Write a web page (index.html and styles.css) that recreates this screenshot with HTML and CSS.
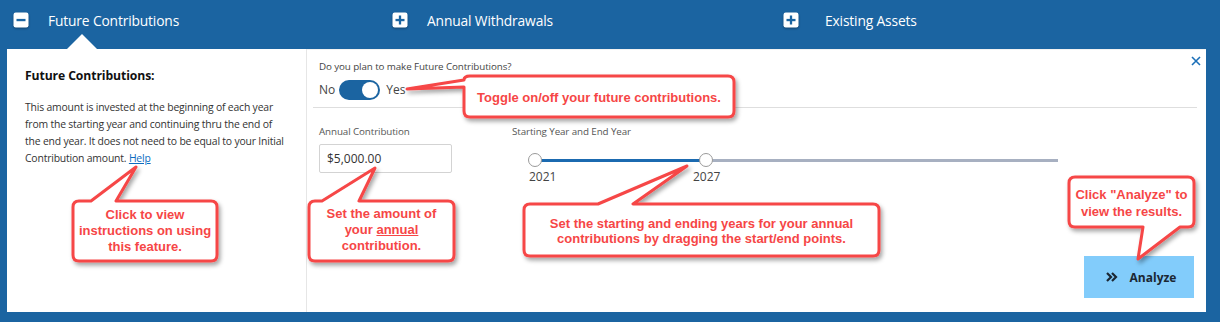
FILE: index.html
```html
<!DOCTYPE html>
<html lang="en">
<head>
<meta charset="utf-8">
<title>Future Contributions</title>
<link rel="stylesheet" href="styles.css">
</head>
<body>
<div class="page">
  <nav class="tabs">
    <div class="tab tab-1 active">
      <svg class="tab-icon" viewBox="0 0 16 16" aria-hidden="true"><rect x="0.5" y="0.5" width="15" height="15" rx="2.2" fill="#fff"/><rect x="3.5" y="6.9" width="9" height="2.3" fill="#1b64a1"/></svg>
      <span class="tab-label">Future Contributions</span>
    </div>
    <div class="tab tab-2">
      <svg class="tab-icon" viewBox="0 0 16 16" aria-hidden="true"><rect x="0.5" y="0.5" width="15" height="15" rx="2.2" fill="#fff"/><rect x="3.5" y="6.9" width="9" height="2.3" fill="#1b64a1"/><rect x="6.85" y="3.5" width="2.3" height="9" fill="#1b64a1"/></svg>
      <span class="tab-label">Annual Withdrawals</span>
    </div>
    <div class="tab tab-3">
      <svg class="tab-icon" viewBox="0 0 16 16" aria-hidden="true"><rect x="0.5" y="0.5" width="15" height="15" rx="2.2" fill="#fff"/><rect x="3.5" y="6.9" width="9" height="2.3" fill="#1b64a1"/><rect x="6.85" y="3.5" width="2.3" height="9" fill="#1b64a1"/></svg>
      <span class="tab-label">Existing Assets</span>
    </div>
  </nav>

  <main class="panel">
    <aside class="info">
      <h3 class="info-title">Future Contributions:</h3>
      <p class="info-text">This amount is invested at the beginning of each year from the starting year and continuing thru the end of the end year. It does not need to be equal to your Initial Contribution amount. <a class="help" href="#">Help</a></p>
    </aside>

    <section class="form">
      <button class="close" aria-label="Close"><svg viewBox="0 0 10 10"><path d="M1 1 L9 9 M9 1 L1 9" stroke="#1b6fb8" stroke-width="1.6" fill="none"/></svg></button>
      <div class="question">Do you plan to make Future Contributions?</div>
      <div class="toggle-row">
        <span class="toggle-text">No</span>
        <span class="switch"><span class="knob"></span></span>
        <span class="toggle-text">Yes</span>
      </div>
      <div class="divider"></div>
      <div class="fields">
        <div class="field amount">
          <div class="field-label">Annual Contribution</div>
          <div class="input">$5,000.00</div>
        </div>
        <div class="field years">
          <div class="field-label">Starting Year and End Year</div>
          <div class="slider">
            <div class="track"></div>
            <div class="range" style="width:171px"></div>
            <span class="handle" style="left:0px"></span>
            <span class="handle" style="left:171px"></span>
            <span class="year" style="left:1px">2021</span>
            <span class="year" style="left:165px">2027</span>
          </div>
        </div>
      </div>
      <div class="actions">
        <button class="analyze"><svg class="chev" viewBox="0 0 12 10" aria-hidden="true"><path d="M1 1 L5 5 L1 9 M6 1 L10 5 L6 9" stroke="#1b2733" stroke-width="2.2" fill="none"/></svg><span>Analyze</span></button>
      </div>
    </section>
  </main>

  <svg class="callouts" viewBox="0 0 1220 322" aria-hidden="true">
    <defs>
      <filter id="sh" x="-10%" y="-20%" width="130%" height="160%">
        <feDropShadow dx="2" dy="3" stdDeviation="2" flood-color="#000" flood-opacity="0.35"/>
      </filter>
    </defs>
    <g fill="#fff" stroke="#f64646" stroke-width="3" stroke-linejoin="round" filter="url(#sh)">
      <path d="M470 76 H728 Q734 76 734 82 V111 Q734 117 728 117 H470 Q464 117 464 111 V87 L407 89 L464 80 Q464 76 470 76 Z"/>
      <path d="M79 201 H91 L136 167 L116 201 H211 Q217 201 217 207 V255 Q217 261 211 261 H79 Q73 261 73 255 V207 Q73 201 79 201 Z"/>
      <path d="M315 201 H322 L375 168 L359 201 H448 Q454 201 454 207 V255 Q454 261 448 261 H315 Q309 261 309 255 V207 Q309 201 315 201 Z"/>
      <path d="M530 204 H598 L687 166 L633 204 H873 Q879 204 879 210 V250 Q879 256 873 256 H530 Q524 256 524 250 V210 Q524 204 530 204 Z"/>
      <path d="M1075 177 H1188 Q1194 177 1194 183 V221 Q1194 227 1188 227 H1180 L1138 259 L1143 227 H1075 Q1069 227 1069 221 V183 Q1069 177 1075 177 Z"/>
    </g>
  </svg>
  <div class="note note-a"><span>Toggle on/off your future contributions.</span></div>
  <div class="note note-b"><span>Click to view<br>instructions on using<br>this feature.</span></div>
  <div class="note note-c"><span>Set the amount of<br>your <u>annual</u><br>contribution.</span></div>
  <div class="note note-d"><span>Set the starting and ending years for your annual<br>contributions by dragging the start/end points.</span></div>
  <div class="note note-e"><span>Click "Analyze" to<br>view the results.</span></div>
</div>
</body>
</html>
```

FILE: styles.css
```css
* { box-sizing: border-box; }

html, body {
  margin: 0;
  padding: 0;
}

body {
  width: 1220px;
  height: 322px;
  overflow: hidden;
  background: #1b64a1;
  font-family: "Open Sans", "Noto Sans", "DejaVu Sans", sans-serif;
  color: #333;
}

.page {
  position: relative;
  width: 1220px;
  height: 322px;
}

/* ---------- Tabs ---------- */
.tabs {
  display: flex;
  height: 49px;
  padding-top: 12px;
}

.tab {
  position: relative;
  display: flex;
  align-items: flex-start;
  gap: 19px;
  height: 37px;
  color: #fff;
}

.tab-1 { width: 392px; padding-left: 13px; }
.tab-2 { width: 391px; gap: 19px; }
.tab-3 { flex: 1; gap: 26px; }

.tab-icon {
  width: 16px;
  height: 16px;
  flex: none;
  filter: drop-shadow(0 1px 1px rgba(0,0,0,0.35));
}

.tab-label {
  font-size: 13.8px;
  line-height: 17px;
  letter-spacing: -0.15px;
  white-space: nowrap;
}

.tab.active::after {
  content: "";
  position: absolute;
  left: 67px;
  bottom: 0;
  width: 0;
  height: 0;
  border-left: 15px solid transparent;
  border-right: 15px solid transparent;
  border-bottom: 15px solid #fff;
}

/* ---------- Panel ---------- */
.panel {
  display: flex;
  margin-left: 7px;
  width: 1199px;
  height: 263px;
  background: #fff;
}

.info {
  width: 300px;
  flex: none;
  border-right: 1px solid #e6e6e6;
  padding: 19px 18px 0 18px;
}

.info-title {
  margin: 0;
  font-size: 12.2px;
  line-height: 16px;
  font-weight: 700;
  color: #111;
  letter-spacing: -0.1px;
}

.info-text {
  margin: 15px 0 0 0;
  font-size: 10.4px;
  line-height: 17px;
  letter-spacing: -0.18px;
  color: #333;
}

.help {
  color: #0d6cbf;
  text-decoration: underline;
}

/* ---------- Form ---------- */
.form {
  position: relative;
  flex: 1;
  display: flex;
  flex-direction: column;
  border-top: 1px solid #f2f2f2;
}

.close {
  position: absolute;
  top: 6px;
  right: 5px;
  width: 10px;
  height: 10px;
  padding: 0;
  border: 0;
  background: none;
}

.close svg { display: block; width: 10px; height: 10px; }

.question {
  margin: 10px 0 0 12px;
  font-size: 9.8px;
  line-height: 14px;
  color: #444;
  letter-spacing: -0.1px;
}

.toggle-row {
  display: flex;
  align-items: center;
  height: 20px;
  margin: 6px 0 0 12px;
  gap: 6px;
}

.toggle-text {
  font-size: 12px;
  line-height: 20px;
  color: #444;
}

.toggle-text:first-child { margin-right: -2px; }

.switch {
  position: relative;
  display: flex;
  align-items: center;
  justify-content: flex-end;
  width: 41px;
  height: 20px;
  padding: 2px;
  border-radius: 10px;
  background: #1b64a1;
}

.knob {
  width: 16px;
  height: 16px;
  border-radius: 50%;
  background: #fff;
}

.divider {
  height: 1px;
  margin: 7px 9px 0 6px;
  background: #dedede;
}

.fields {
  display: flex;
  gap: 60px;
  margin: 17px 0 0 12px;
}

.field-label {
  font-size: 9.8px;
  line-height: 14px;
  color: #555;
  letter-spacing: -0.1px;
}

.input {
  width: 133px;
  height: 29px;
  margin-top: 5px;
  padding: 0 7px;
  border: 1px solid #d3d3d3;
  border-radius: 2px;
  font-size: 12px;
  line-height: 27px;
  color: #333;
}

.slider {
  position: relative;
  width: 537px;
  height: 38px;
  margin: 15px 0 0 16px;
}

.track {
  position: absolute;
  left: 7px;
  top: 5px;
  width: 523px;
  height: 3px;
  background: #a7b0c1;
}

.range {
  position: absolute;
  left: 7px;
  top: 5px;
  height: 3px;
  background: #1b6ab0;
}

.handle {
  position: absolute;
  top: -1px;
  width: 14px;
  height: 14px;
  border: 1px solid #9a9a9a;
  border-radius: 50%;
  background: #fff;
}

.year {
  position: absolute;
  top: 15px;
  font-size: 12px;
  line-height: 16px;
  color: #444;
}

.actions {
  margin-top: auto;
  display: flex;
  justify-content: flex-end;
  padding: 0 12px 14px 0;
}

.analyze {
  display: flex;
  align-items: center;
  justify-content: center;
  gap: 12px;
  width: 110px;
  height: 42px;
  padding: 0 0 0 4px;
  border: 0;
  background: #82ccfb;
  font-family: "Open Sans", "Noto Sans", sans-serif;
  font-size: 12px;
  font-weight: 700;
  color: #1b2733;
}

.chev { width: 12px; height: 10px; }

/* ---------- Annotation callouts ---------- */
.callouts {
  position: absolute;
  left: 0;
  top: 0;
  width: 1220px;
  height: 322px;
  pointer-events: none;
}

.note {
  position: absolute;
  display: flex;
  align-items: center;
  justify-content: center;
  text-align: center;
  font-family: "Liberation Sans", Arial, sans-serif;
  font-weight: 700;
  font-size: 13px;
  line-height: 16px;
  color: #f64646;
  pointer-events: none;
}

.note-a { left: 464px; top: 78px; width: 270px; height: 40px; }
.note-b { left: 73px; top: 201px; width: 144px; height: 60px; }
.note-c { left: 309px; top: 200px; width: 145px; height: 60px; }
.note-d { left: 524px; top: 205px; width: 355px; height: 51px; line-height: 15px; }
.note-e { left: 1069px; top: 178px; width: 125px; height: 49px; line-height: 17px; }
```
